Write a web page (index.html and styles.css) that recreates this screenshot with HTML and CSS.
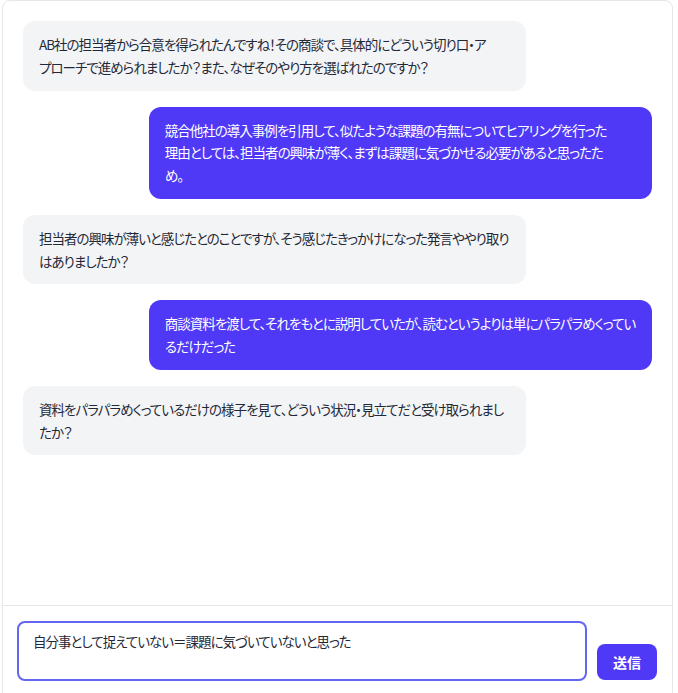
FILE: index.html
```html
<!DOCTYPE html>
<html lang="ja">
<head>
<meta charset="utf-8">
<title>Chat</title>
<link rel="stylesheet" href="styles.css">
</head>
<body>
<div class="app">
  <div class="messages">
    <div class="row bot"><div class="bubble">AB社の担当者から合意を得られたんですね！その商談で、具体的にどういう切り口・ア<br>プローチで進められましたか？また、なぜそのやり方を選ばれたのですか？</div></div>
    <div class="row user"><div class="bubble">競合他社の導入事例を引用して、似たような課題の有無についてヒアリングを行った<br>理由としては、担当者の興味が薄く、まずは課題に気づかせる必要があると思ったた<br>め。</div></div>
    <div class="row bot"><div class="bubble">担当者の興味が薄いと感じたとのことですが、そう感じたきっかけになった発言ややり取り<br>はありましたか？</div></div>
    <div class="row user"><div class="bubble">商談資料を渡して、それをもとに説明していたが、読むというよりは単にパラパラめくってい<br>るだけだった</div></div>
    <div class="row bot"><div class="bubble">資料をパラパラめくっているだけの様子を見て、どういう状況・見立てだと受け取られまし<br>たか？</div></div>
  </div>
  <div class="composer">
    <textarea class="input">自分事として捉えていない＝課題に気づいていないと思った</textarea>
    <button class="send">送信</button>
  </div>
</div>
</body>
</html>
```
FILE: styles.css
```css
* { box-sizing: border-box; }
html, body { margin: 0; padding: 0; background: #ffffff; }
body {
  font-family: "Noto Sans CJK JP", "Noto Sans", sans-serif;
  color: #1f2937;
  overflow: hidden;
}
.app {
  margin-left: 2px;
  width: 671px;
  height: 700px;
  border: 1px solid #e5e7eb;
  border-radius: 8px;
  display: flex;
  flex-direction: column;
  background: #ffffff;
}
.messages {
  flex: 1;
  padding: 20px 20px;
  display: flex;
  flex-direction: column;
  gap: 16px;
  overflow: hidden;
}
.row { display: flex; }
.row.user { justify-content: flex-end; }
.bubble {
  width: 80%;
  padding: 12px 16px;
  border-radius: 12px;
  font-size: 13.5px;
  line-height: 22.75px;
  font-feature-settings: "palt";
  letter-spacing: -1px;
  white-space: nowrap;
}
.bot .bubble { background: #f3f4f6; color: #1f2937; }
.user .bubble { background: #4f39f6; color: #ffffff; }
.composer {
  flex: 0 0 auto;
  height: 94px;
  border-top: 1px solid #e5e7eb;
  padding: 15px 15px 0 14px;
  display: flex;
  align-items: flex-start;
  gap: 10px;
}
.input {
  width: 570px;
  height: 60px;
  flex: 0 0 auto;
  border: 2px solid #6366f1;
  border-radius: 8px;
  padding: 8px 14px;
  font-family: "Noto Sans CJK JP", "Noto Sans", sans-serif;
  font-size: 13.5px;
  line-height: 20px;
  font-feature-settings: "palt";
  letter-spacing: -1px;
  color: #1f2937;
  resize: none;
  outline: none;
  background: #ffffff;
}
.send {
  margin-top: 23px;
  width: 60px;
  height: 36px;
  border: none;
  border-radius: 8px;
  background: #4f39f6;
  color: #ffffff;
  font-family: "Noto Sans CJK JP", "Noto Sans", sans-serif;
  font-size: 14px;
  font-weight: 700;
  padding: 0;
}
```
